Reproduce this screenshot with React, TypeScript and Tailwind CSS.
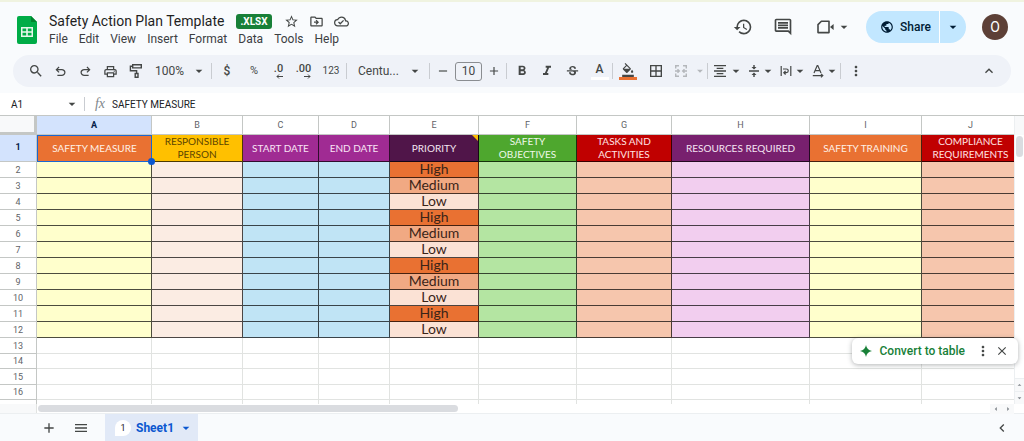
import type { ReactNode } from "react";
import {
  MdAdd,
  MdArrowDropDown,
  MdArrowDropUp,
  MdArrowLeft,
  MdArrowRight,
  MdBorderAll,
  MdChevronLeft,
  MdClose,
  MdFormatAlignCenter,
  MdFormatBold,
  MdFormatColorFill,
  MdFormatItalic,
  MdHistory,
  MdKeyboardArrowUp,
  MdMenu,
  MdMoreVert,
  MdOutlineCloudDone,
  MdOutlineComment,
  MdOutlineDriveFileMove,
  MdOutlinePrint,
  MdPublic,
  MdRemove,
  MdSearch,
  MdStarBorder,
  MdStrikethroughS,
} from "react-icons/md";

const MENUS = ["File", "Edit", "View", "Insert", "Format", "Data", "Tools", "Help"];

const COLUMNS = [
  { id: "A", title: "SAFETY MEASURE", width: "w-[115px]", head: "bg-[#e97132] text-[#fff0e6]", body: "bg-[#ffffcc]" },
  { id: "B", title: "RESPONSIBLE PERSON", width: "w-[91px]", head: "bg-[#ffc000] text-[#5c4500]", body: "bg-[#fbece3]" },
  { id: "C", title: "START DATE", width: "w-[76px]", head: "bg-[#a02b93] text-[#f8e4f5]", body: "bg-[#c0e4f5]" },
  { id: "D", title: "END DATE", width: "w-[71px]", head: "bg-[#a02b93] text-[#f8e4f5]", body: "bg-[#c0e4f5]" },
  { id: "E", title: "PRIORITY", width: "w-[89px]", head: "bg-[#501549] text-[#f3e6f2]", body: "" },
  { id: "F", title: "SAFETY OBJECTIVES", width: "w-[98px]", head: "bg-[#4ea72e] text-[#eef8ea]", body: "bg-[#b4e5a2]" },
  { id: "G", title: "TASKS AND ACTIVITIES", width: "w-[95px]", head: "bg-[#c00000] text-[#ffe3e3]", body: "bg-[#f6c6ad]" },
  { id: "H", title: "RESOURCES REQUIRED", width: "w-[138px]", head: "bg-[#78206e] text-[#f5e4f3]", body: "bg-[#f2ceef]" },
  { id: "I", title: "SAFETY TRAINING", width: "w-[112px]", head: "bg-[#e97132] text-[#fff0e6]", body: "bg-[#ffffcc]" },
  { id: "J", title: "COMPLIANCE REQUIREMENTS", width: "", head: "bg-[#c00000] text-[#ffe3e3]", body: "bg-[#f6c6ad]" },
];

const PRIORITIES = ["High", "Medium", "Low", "High", "Medium", "Low", "High", "Medium", "Low", "High", "Low"];

const PRIORITY_COLORS: Record<string, string> = {
  High: "bg-[#e97132]",
  Medium: "bg-[#f1a983]",
  Low: "bg-[#fbe2d5]",
};

const EMPTY_ROWS = [13, 14, 15, 16];

function Divider() {
  return <span className="h-4 w-px shrink-0 bg-[#c9ccd1]" />;
}

function Tool({ label, width = "w-[25px]", children }: { label: string; width?: string; children: ReactNode }) {
  return (
    <button type="button" aria-label={label} className={`flex h-6 shrink-0 items-center justify-center ${width}`}>
      {children}
    </button>
  );
}

function MenuTool({ label, width = "w-8", children }: { label: string; width?: string; children: ReactNode }) {
  return (
    <button type="button" aria-label={label} className={`flex h-6 shrink-0 items-center justify-end ${width}`}>
      {children}
      <MdArrowDropDown className="size-4" />
    </button>
  );
}

function UndoIcon({ className = "" }: { className?: string }) {
  return (
    <svg viewBox="0 -960 960 960" fill="currentColor" className={`size-[15px] ${className}`}>
      <path d="M280-200v-80h284q63 0 109.5-40T720-420q0-60-46.5-100T564-560H312l104 104-56 56-200-200 200-200 56 56-104 104h252q97 0 169.5 63T800-420q0 94-72.5 157T564-200H280Z" />
    </svg>
  );
}

function PaintIcon() {
  return (
    <svg viewBox="0 0 14 16" fill="none" stroke="currentColor" strokeWidth="1.4" className="h-4 w-3.5">
      <path d="M3.7 1.7h8.6v3.2H3.7zM3.7 3.3H1.4v4.4h6.2v2.6M6.2 10.5h2.8v3.8H6.2z" />
    </svg>
  );
}

function DecimalIcon({ text, arrow }: { text: string; arrow: string }) {
  return (
    <span className="flex flex-col items-end">
      <span className="text-[11px] leading-[10px] font-medium">{text}</span>
      <svg viewBox="0 0 7 5" fill="none" stroke="currentColor" className="h-[5px] w-[7px]">
        <path d={arrow} />
      </svg>
    </span>
  );
}

function MergeIcon() {
  return (
    <svg viewBox="0 0 14 14" fill="none" stroke="currentColor" strokeWidth="1.4" className="size-3.5">
      <path d="M5 1.7H1.7V4.5M9 1.7h3.3V4.5M5 12.3H1.7V9.5M9 12.3h3.3V9.5M1 7h4M3.5 5.2 5.3 7 3.5 8.8M13 7H9M10.5 5.2 8.7 7l1.8 1.8" />
    </svg>
  );
}

function VerticalAlignIcon() {
  return (
    <svg viewBox="0 0 12 14" fill="currentColor" className="h-3.5 w-3">
      <path d="M1 6.3h10v1.4H1zM5.3 1h1.4v2h1.8L6 5.4 3.5 3h1.8zM5.3 13h1.4v-2h1.8L6 8.6 3.5 11h1.8z" />
    </svg>
  );
}

function WrapIcon() {
  return (
    <svg viewBox="0 0 12 12" fill="none" stroke="currentColor" strokeWidth="1.2" className="size-3">
      <path d="M1.2 1v10M10.8 1v10M3 4h3.4a1.8 1.8 0 0 1 0 3.7H4M5.6 5.8 3.8 7.7l1.8 1.8" />
    </svg>
  );
}

function RotateIcon() {
  return (
    <svg viewBox="0 0 12 14" fill="none" stroke="currentColor" strokeWidth="1.2" className="h-3.5 w-3">
      <path d="M2 9 5.2 1.6h.6L9 9M3.2 6.6h4.6M.8 11.6h10M9 9.8l1.8 1.8L9 13.4" />
    </svg>
  );
}

function SheetsLogo() {
  return (
    <svg viewBox="0 0 20 28" className="h-7 w-5 shrink-0">
      <path fill="#00ac47" d="M2 0h12l6 6v20a2 2 0 0 1-2 2H2a2 2 0 0 1-2-2V2a2 2 0 0 1 2-2z" />
      <path fill="#00832d" d="M14 0l6 6h-6z" />
      <path fill="#e6f7ec" fillRule="evenodd" d="M4 11h12v10H4zM5.5 12.5v2.7h3.7v-2.7zM10.8 12.5v2.7h3.7v-2.7zM5.5 16.8v2.7h3.7v-2.7zM10.8 16.8v2.7h3.7v-2.7z" />
    </svg>
  );
}

function MeetIcon() {
  return (
    <svg viewBox="0 0 17 14" className="h-3.5 w-[17px]">
      <path fill="none" stroke="currentColor" strokeWidth="1.6" strokeLinejoin="round" d="M1 4.6 4.4 1.2H12V12.6H1z" />
      <path fill="currentColor" d="M13 6.9l3.6-3v6z" />
    </svg>
  );
}

function Header() {
  return (
    <header className="flex h-[51px] items-center pr-4 pl-[17px]">
      <SheetsLogo />
      <div className="ml-3 flex flex-col pb-px">
        <div className="flex h-5 items-center">
          <h1 className="text-sm leading-5 whitespace-nowrap text-[#1f1f1f]">Safety Action Plan Template</h1>
          <span className="ml-3 rounded-[3px] bg-[#188038] px-1 text-[10px] leading-[15px] font-bold text-white">.XLSX</span>
          <div className="ml-3 flex gap-2.5 text-[#444746]">
            <button type="button" aria-label="Star"><MdStarBorder className="size-[15px]" /></button>
            <button type="button" aria-label="Move"><MdOutlineDriveFileMove className="size-[15px]" /></button>
            <button type="button" aria-label="Document status"><MdOutlineCloudDone className="size-[15px]" /></button>
          </div>
        </div>
        <nav className="flex gap-[11px] text-xs leading-4 text-[#3c4043]">
          {MENUS.map((menu) => (
            <button type="button" key={menu}>{menu}</button>
          ))}
        </nav>
      </div>
      <div className="ml-auto flex items-center pb-1.5 text-[#444746]">
        <button type="button" aria-label="Version history"><MdHistory className="size-5" /></button>
        <button type="button" aria-label="Comments" className="ml-5"><MdOutlineComment className="size-5" /></button>
        <button type="button" aria-label="Join a call" className="ml-6 flex items-center gap-0.5">
          <MeetIcon />
          <MdArrowDropDown className="size-4" />
        </button>
        <div className="ml-3.5 flex h-8 overflow-hidden rounded-full bg-[#c2e7ff] text-[#001d35]">
          <button type="button" className="flex items-center gap-1.5 pr-2 pl-3.5 text-xs font-medium">
            <MdPublic className="size-3.5" />
            Share
          </button>
          <button type="button" aria-label="Sharing options" className="flex w-[27px] items-center justify-center border-l border-white">
            <MdArrowDropDown className="size-4" />
          </button>
        </div>
        <button type="button" className="ml-4 size-[26px] rounded-full bg-[#5d4037] text-sm text-white">O</button>
      </div>
    </header>
  );
}

function Toolbar() {
  return (
    <div className="mx-[13px] flex h-8 items-center rounded-full bg-[#eff2f8] pr-3.5 pl-2.5 text-xs text-[#444746]">
      <Tool label="Search"><MdSearch className="size-4" /></Tool>
      <Tool label="Undo"><UndoIcon /></Tool>
      <Tool label="Redo"><UndoIcon className="-scale-x-100" /></Tool>
      <Tool label="Print"><MdOutlinePrint className="size-[15px]" /></Tool>
      <Tool label="Paint format"><PaintIcon /></Tool>
      <button type="button" className="mr-1 flex w-[59px] shrink-0 items-center justify-between pl-[7px]">
        100%
        <MdArrowDropDown className="size-4" />
      </button>
      <Divider />
      <Tool label="Currency" width="w-[30px]"><span className="font-medium">$</span></Tool>
      <Tool label="Percent" width="w-6"><span className="text-[11px]">%</span></Tool>
      <Tool label="Decrease decimals"><DecimalIcon text=".0" arrow="M7 2.5H1M3 .5l-2 2 2 2" /></Tool>
      <Tool label="Increase decimals"><DecimalIcon text=".00" arrow="M0 2.5h6M4 .5l2 2-2 2" /></Tool>
      <Tool label="More formats" width="w-[30px]"><span className="text-[10px]">123</span></Tool>
      <Divider />
      <button type="button" className="mr-1.5 flex w-[76px] shrink-0 items-center justify-between pl-[11px]">
        Centu...
        <MdArrowDropDown className="size-4" />
      </button>
      <Divider />
      <Tool label="Decrease font size"><MdRemove className="size-3.5" /></Tool>
      <input aria-label="Font size" defaultValue="10" className="h-[19px] w-[27px] shrink-0 rounded-[3px] border border-[#8a8d91] text-center text-xs" />
      <Tool label="Increase font size" width="w-6"><MdAdd className="size-3.5" /></Tool>
      <Divider />
      <Tool label="Bold" width="w-[30px]"><MdFormatBold className="size-4" /></Tool>
      <Tool label="Italic" width="w-5"><MdFormatItalic className="size-4" /></Tool>
      <Tool label="Strikethrough" width="w-[30px]"><MdStrikethroughS className="size-[15px]" /></Tool>
      <Tool label="Text color">
        <span className="flex flex-col items-center">
          <span className="text-xs leading-3 font-medium">A</span>
          <span className="mt-0.5 h-[3px] w-[18px] bg-white" />
        </span>
      </Tool>
      <Divider />
      <Tool label="Fill color" width="w-[30px]">
        <span className="flex flex-col items-center">
          <MdFormatColorFill className="size-3.5" />
          <span className="h-[3px] w-[18px] bg-[#e97132]" />
        </span>
      </Tool>
      <Tool label="Borders"><MdBorderAll className="size-4" /></Tool>
      <span className="flex shrink-0 items-center text-[#b4b7bb]">
        <Tool label="Merge cells"><MergeIcon /></Tool>
        <MdArrowDropDown className="size-3.5" />
      </span>
      <Divider />
      <MenuTool label="Horizontal align" width="w-9"><MdFormatAlignCenter className="size-4" /></MenuTool>
      <MenuTool label="Vertical align"><VerticalAlignIcon /></MenuTool>
      <MenuTool label="Text wrapping"><WrapIcon /></MenuTool>
      <MenuTool label="Text rotation"><RotateIcon /></MenuTool>
      <Divider />
      <Tool label="More" width="w-[30px]"><MdMoreVert className="size-4" /></Tool>
      <button type="button" aria-label="Hide the menus" className="ml-auto"><MdKeyboardArrowUp className="size-4" /></button>
    </div>
  );
}

function FormulaBar() {
  return (
    <div className="flex h-[22px] items-center text-[10px] text-[#202124]">
      <button type="button" aria-label="Name box" className="flex w-20 items-center justify-between pl-[11px]">
        A1
        <MdArrowDropDown className="size-4 text-[#444746]" />
      </button>
      <span className="ml-1 h-3.5 w-px bg-[#c9ccd1]" />
      <span className="w-5 text-right font-['Liberation_Serif',serif] text-sm text-[#80868b] italic">fx</span>
      <input aria-label="Formula" defaultValue="SAFETY MEASURE" className="ml-[7px] min-w-0 flex-1" />
    </div>
  );
}

function Grid() {
  return (
    <table className="w-[calc(100%+6px)] table-fixed border-separate border-spacing-0 text-center">
      <colgroup>
        <col className="w-[37px]" />
        {COLUMNS.map((col) => (
          <col key={col.id} className={col.width} />
        ))}
      </colgroup>
      <thead>
        <tr className="h-[19px] text-[9px] leading-3 text-[#5f6368]">
          <td className="border-r-3 border-b-3 border-[#c4c7c5] bg-[#f8f9fa] p-0" />
          {COLUMNS.map((col) => (
            <th
              key={col.id}
              scope="col"
              className={`border-r border-b border-[#c4c7c5] p-0 ${col.id === "A" ? "bg-[#d3e3fd] font-bold text-[#041e49]" : "font-normal"}`}
            >
              {col.id}
            </th>
          ))}
        </tr>
      </thead>
      <tbody>
        <tr className="h-[27px]">
          <th scope="row" className="border-r border-b border-[#c4c7c5] bg-[#d3e3fd] p-0 text-[9px] font-bold text-[#041e49]">1</th>
          {COLUMNS.map((col) => (
            <td
              key={col.id}
              className={`relative px-1 py-0 font-['Lato',sans-serif] text-[10px] leading-[13px] ${col.head} ${col.id === "A" ? "border border-[#1967d2]" : "border-r border-b border-black/70"}`}
            >
              {col.title}
              {col.id === "A" && <span className="absolute -right-1 -bottom-1 z-10 size-[7px] rounded-full bg-[#0b57d0]" />}
              {col.id === "E" && (
                <svg viewBox="0 0 6 6" className="absolute top-0 right-0 size-1.5">
                  <path fill="#fbbc04" d="M0 0h6v6z" />
                </svg>
              )}
            </td>
          ))}
        </tr>
        {PRIORITIES.map((priority, i) => (
          <tr key={i} className="h-4">
            <th scope="row" className="border-r border-b border-[#c4c7c5] p-0 text-[9px] leading-3 font-normal text-[#5f6368]">{i + 2}</th>
            {COLUMNS.map((col) => (
              <td
                key={col.id}
                className={`border-r border-b border-r-black/70 border-b-black/70 p-0 align-top font-['Lato',sans-serif] text-sm leading-[14px] text-[#3a2418] ${col.id === "E" ? PRIORITY_COLORS[priority] : col.body}`}
              >
                {col.id === "E" && priority}
              </td>
            ))}
          </tr>
        ))}
        {EMPTY_ROWS.map((row) => (
          <tr key={row} className={row % 2 ? "h-4" : "h-[15px]"}>
            <th scope="row" className="border-r border-b border-[#c4c7c5] p-0 text-[9px] leading-3 font-normal text-[#5f6368]">{row}</th>
            {COLUMNS.map((col) => (
              <td key={col.id} className="border-r border-b border-[#e1e3e1] p-0" />
            ))}
          </tr>
        ))}
        <tr className="h-1">
          <td className="border-r border-[#c4c7c5] p-0" />
          {COLUMNS.map((col) => (
            <td key={col.id} className="border-r border-[#e1e3e1] p-0" />
          ))}
        </tr>
      </tbody>
    </table>
  );
}

function ConvertToast() {
  return (
    <div className="absolute right-1.5 bottom-10 z-20 flex h-[26px] items-center rounded-md bg-white pr-[9px] pl-2 shadow-[0_1px_5px_rgba(60,64,67,0.4)]">
      <svg viewBox="0 0 12 12" fill="#188038" className="size-3">
        <path d="M6 0q.8 5.200 6 6q-5.200.8-6 6q-.8-5.200-6-6q5.200-.8 6-6z" />
      </svg>
      <button type="button" className="ml-2 text-xs font-medium text-[#188038]">Convert to table</button>
      <button type="button" aria-label="Options" className="ml-2.5"><MdMoreVert className="size-4 text-[#444746]" /></button>
      <button type="button" aria-label="Close" className="ml-1"><MdClose className="size-3.5 text-[#444746]" /></button>
    </div>
  );
}

function SheetTabs() {
  return (
    <footer className="flex min-h-[27px] flex-1 items-stretch bg-[#f9fbfd] pr-3.5 pl-[41px] text-[#444746]">
      <button type="button" aria-label="Add sheet" className="flex items-center"><MdAdd className="size-4" /></button>
      <button type="button" aria-label="All sheets" className="ml-4 flex items-center"><MdMenu className="size-4" /></button>
      <button type="button" className="ml-4 flex items-center bg-[#e1e9f7] pr-1 pl-2.5 text-xs font-bold text-[#0b57d0]">
        <span className="mr-[5px] size-4 rounded-full rounded-bl-none bg-white text-[9px] leading-4 font-normal text-[#202124]">1</span>
        Sheet1
        <MdArrowDropDown className="ml-1 size-4" />
      </button>
      <button type="button" aria-label="Show side panel" className="ml-auto flex items-center"><MdChevronLeft className="size-4" /></button>
    </footer>
  );
}

export default function App() {
  return (
    <div className="flex min-h-screen flex-col bg-white font-['Roboto',sans-serif]">
      <div className="border-t-2 border-[#f0f3e0] bg-[#f9fbfd] pt-0.5 pb-1.5">
        <Header />
        <Toolbar />
      </div>
      <FormulaBar />
      <main className="relative flex border-t border-[#c4c7c5]">
        <div className="min-w-0 flex-1 overflow-hidden">
          <Grid />
        </div>
        <div className="flex w-2.5 flex-col items-center border-l border-[#eceff1] bg-white">
          <span className="h-[19px] w-full bg-[#f8f9fa]" />
          <span className="mt-px h-[21px] w-[7px] rounded-full bg-[#dadce0]" />
          <span className="mt-auto flex flex-col text-[#80868b]">
            <button type="button" aria-label="Scroll up" className="border-y border-[#eceff1] bg-[#f8f9fa]"><MdArrowDropUp className="h-3 w-[9px]" /></button>
            <button type="button" aria-label="Scroll down" className="bg-[#f8f9fa]"><MdArrowDropDown className="h-3 w-[9px]" /></button>
          </span>
        </div>
        <ConvertToast />
      </main>
      <div className="flex h-2.5 items-center border-b border-[#eceff1] bg-white">
        <span className="h-full w-[37px] border-r border-[#e1e3e1] bg-[#f8f9fa]" />
        <span className="ml-px h-[7px] w-[41%] rounded-full bg-[#dadce0]" />
        <span className="mr-2.5 ml-auto flex text-[#80868b]">
          <button type="button" aria-label="Scroll left" className="bg-[#f8f9fa]"><MdArrowLeft className="h-2.5 w-3" /></button>
          <button type="button" aria-label="Scroll right" className="bg-[#f8f9fa]"><MdArrowRight className="h-2.5 w-3" /></button>
        </span>
      </div>
      <SheetTabs />
    </div>
  );
}
